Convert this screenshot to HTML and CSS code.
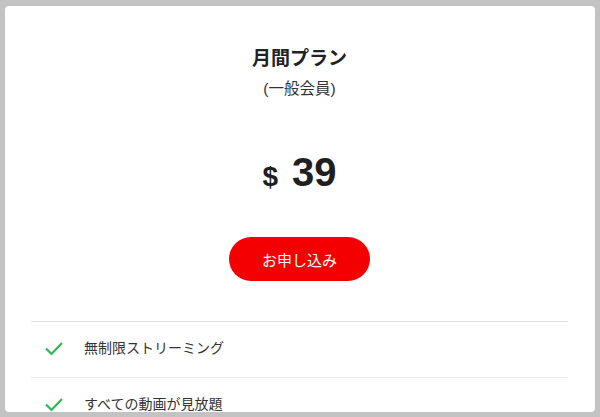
FILE: index.html
```html
<!DOCTYPE html>
<html lang="ja">
<head>
    <meta charset="UTF-8">
    <meta name="viewport" content="width=device-width, initial-scale=1.0">
    <title>月間プラン</title>
    <link rel="stylesheet" href="styles.css">
</head>
<body>
    <div class="plan-card">
        <div class="plan-header">
            <h2 class="plan-title">月間プラン</h2>
            <p class="plan-sub">(一般会員)</p>
        </div>
        <div class="plan-price">
            <span class="currency">$</span>
            <span class="amount">39</span>
        </div>
        <div class="plan-action">
            <button class="apply-btn">お申し込み</button>
        </div>
        <ul class="feature-list">
            <li class="feature">
                <svg class="check" width="20" height="15" viewBox="0 0 20 15"><path d="M2 7.5 L7.5 13 L18 2" fill="none" stroke="#2fb94e" stroke-width="2.2"/></svg>
                <span>無制限ストリーミング</span>
            </li>
            <li class="feature">
                <svg class="check" width="20" height="15" viewBox="0 0 20 15"><path d="M2 7.5 L7.5 13 L18 2" fill="none" stroke="#2fb94e" stroke-width="2.2"/></svg>
                <span>すべての動画が見放題</span>
            </li>
        </ul>
    </div>
</body>
</html>
```

FILE: styles.css
```css
:root {
    --page-bg: #c3c3c3;
    --card-bg: #ffffff;
    --text-main: #222222;
    --text-soft: #333333;
    --accent: #f50000;
    --line: #e0e0e0;
}

* {
    margin: 0;
    padding: 0;
    box-sizing: border-box;
    font-family: 'Liberation Sans', 'Noto Sans CJK JP', sans-serif;
}

body {
    background: var(--page-bg);
    height: 100vh;
    padding: 6px 5px 5px 5px;
    color: var(--text-main);
}

.plan-card {
    background: var(--card-bg);
    border-radius: 4px;
    height: 100%;
    overflow: hidden;
    padding: 0 27px 0 26px;
}

.plan-header {
    text-align: center;
    padding-top: 40px;
}

.plan-title {
    font-size: 19px;
    font-weight: 700;
    line-height: 26px;
}

.plan-sub {
    font-size: 15.5px;
    line-height: 22px;
    margin-top: 6px;
    color: var(--text-soft);
}

.plan-price {
    display: flex;
    justify-content: center;
    align-items: baseline;
    gap: 14px;
    margin-top: 49px;
    font-weight: 700;
    color: #1f1f1f;
    line-height: 46px;
}

.currency {
    font-size: 28px;
}

.amount {
    font-size: 40px;
}

.plan-action {
    display: flex;
    justify-content: center;
    margin-top: 37px;
}

.apply-btn {
    width: 141px;
    height: 44px;
    border: none;
    border-radius: 22px;
    background: var(--accent);
    color: #ffffff;
    font-size: 15px;
    cursor: pointer;
}

.feature-list {
    list-style: none;
    margin-top: 40px;
}

.feature {
    display: flex;
    align-items: center;
    gap: 20px;
    border-top: 1px solid var(--line);
    padding: 16px 0 18px 13px;
    font-size: 14px;
    line-height: 21px;
    color: var(--text-soft);
}

.feature + .feature {
    border-top-color: #eaeaea;
}

.check {
    flex-shrink: 0;
}
```
